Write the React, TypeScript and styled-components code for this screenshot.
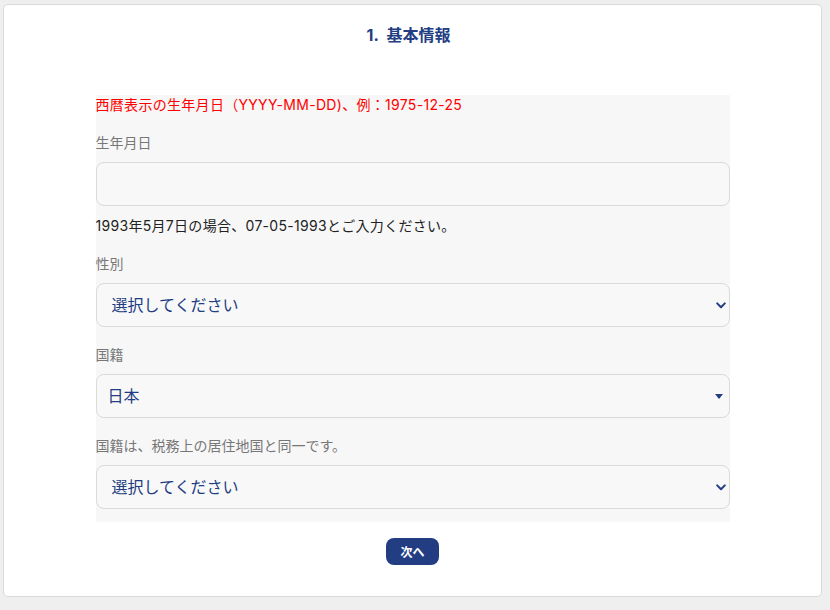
import styled, { createGlobalStyle } from "styled-components";

const FONT = `"Inter", "Noto Sans CJK JP", sans-serif`;

const GlobalStyle = createGlobalStyle`
  html, body {
    margin: 0;
    padding: 0;
    background: #efefef;
  }
  body {
    font-family: ${FONT};
    -webkit-font-smoothing: antialiased;
  }
`;

const NAVY = "#233d83";

type Option = { value: string; label: string };

const genderOptions: Option[] = [
  { value: "", label: "選択してください" },
  { value: "male", label: "男性" },
  { value: "female", label: "女性" },
];

const countryOptions: Option[] = [
  { value: "JP", label: "日本" },
  { value: "US", label: "アメリカ" },
];

const Chevron = () => (
  <ChevronIcon width="10" height="7" viewBox="0 0 10 7" aria-hidden>
    <path
      d="M1.2 1.4 5 5.2 8.8 1.4"
      fill="none"
      stroke={NAVY}
      strokeWidth="2"
      strokeLinecap="round"
      strokeLinejoin="round"
    />
  </ChevronIcon>
);

const Caret = () => (
  <CaretIcon width="8" height="5" viewBox="0 0 8 5" aria-hidden>
    <path d="M0 0h8L4 5z" fill={NAVY} />
  </CaretIcon>
);

const SelectField = ({
  options,
  caret,
}: {
  options: Option[];
  caret?: boolean;
}) => (
  <SelectWrap>
    <Select $tight={caret} defaultValue={options[0].value}>
      {options.map((o) => (
        <option key={o.value} value={o.value}>
          {o.label}
        </option>
      ))}
    </Select>
    {caret ? <Caret /> : <Chevron />}
  </SelectWrap>
);

export default function App() {
  return (
    <Page>
      <GlobalStyle />
      <Card>
        <Title>1.&nbsp;&nbsp;基本情報</Title>
        <FormSection>
          <Notice>西暦表示の生年月日（YYYY-MM-DD)、例：1975-12-25</Notice>

          <Field>
            <Label>生年月日</Label>
            <TextInput type="text" />
            <Hint>1993年5月7日の場合、07-05-1993とご入力ください。</Hint>
          </Field>

          <Field>
            <Label>性別</Label>
            <SelectField options={genderOptions} />
          </Field>

          <Field>
            <Label>国籍</Label>
            <SelectField options={countryOptions} caret />
          </Field>

          <Field>
            <Label>国籍は、税務上の居住地国と同一です。</Label>
            <SelectField options={genderOptions} />
          </Field>
        </FormSection>
        <Actions>
          <NextButton type="button">次へ</NextButton>
        </Actions>
      </Card>
    </Page>
  );
}

const Page = styled.div`
  padding: 4px 8px 14px 3px;
`;

const Card = styled.div`
  background: #fff;
  border: 1px solid #d6d9de;
  border-radius: 5px;
  padding: 19px 0 31px;
`;

const Title = styled.h2`
  margin: 0 0 49px;
  text-align: center;
  font-size: 16px;
  line-height: 22px;
  font-weight: 700;
  color: ${NAVY};
  padding-right: 8px;
`;

const FormSection = styled.div`
  width: 634px;
  margin: 0 auto;
  background: #f7f7f7;
  padding-bottom: 13px;
  display: flex;
  flex-direction: column;
  gap: 18px;
`;

const Notice = styled.p`
  margin: 0;
  font-size: 14px;
  line-height: 20px;
  letter-spacing: 0.3px;
  color: #ff0000;
`;

const Field = styled.div`
  display: flex;
  flex-direction: column;
`;

const Label = styled.label`
  font-size: 14px;
  line-height: 20px;
  color: #777;
  margin-bottom: 9px;
`;

const Hint = styled.p`
  margin: 10px 0 0;
  font-size: 14px;
  line-height: 20px;
  letter-spacing: 0.3px;
  color: #222;
`;

const TextInput = styled.input`
  box-sizing: border-box;
  height: 44px;
  width: 100%;
  border: 1px solid #dadada;
  border-radius: 8px;
  background: #f8f8f8;
  padding: 0 14px;
  font-family: ${FONT};
  font-size: 16px;
  outline: none;
`;

const SelectWrap = styled.div`
  position: relative;
`;

const Select = styled.select<{ $tight?: boolean }>`
  box-sizing: border-box;
  appearance: none;
  -webkit-appearance: none;
  height: 44px;
  width: 100%;
  border: 1px solid #dadada;
  border-radius: 8px;
  background: #f8f8f8;
  padding: 0 30px 0 ${(p) => (p.$tight ? "11px" : "15px")};
  font-family: ${FONT};
  font-size: 16px;
  color: ${NAVY};
  outline: none;
`;

const ChevronIcon = styled.svg`
  position: absolute;
  right: 4px;
  top: 19px;
  pointer-events: none;
`;

const CaretIcon = styled.svg`
  position: absolute;
  right: 7px;
  top: 20px;
  pointer-events: none;
`;

const Actions = styled.div`
  display: flex;
  justify-content: center;
  margin-top: 16px;
`;

const NextButton = styled.button`
  height: 27px;
  padding: 0 14px;
  border: none;
  border-radius: 8px;
  background: ${NAVY};
  color: #fff;
  font-family: ${FONT};
  font-size: 12px;
  font-weight: 700;
  cursor: pointer;
`;
